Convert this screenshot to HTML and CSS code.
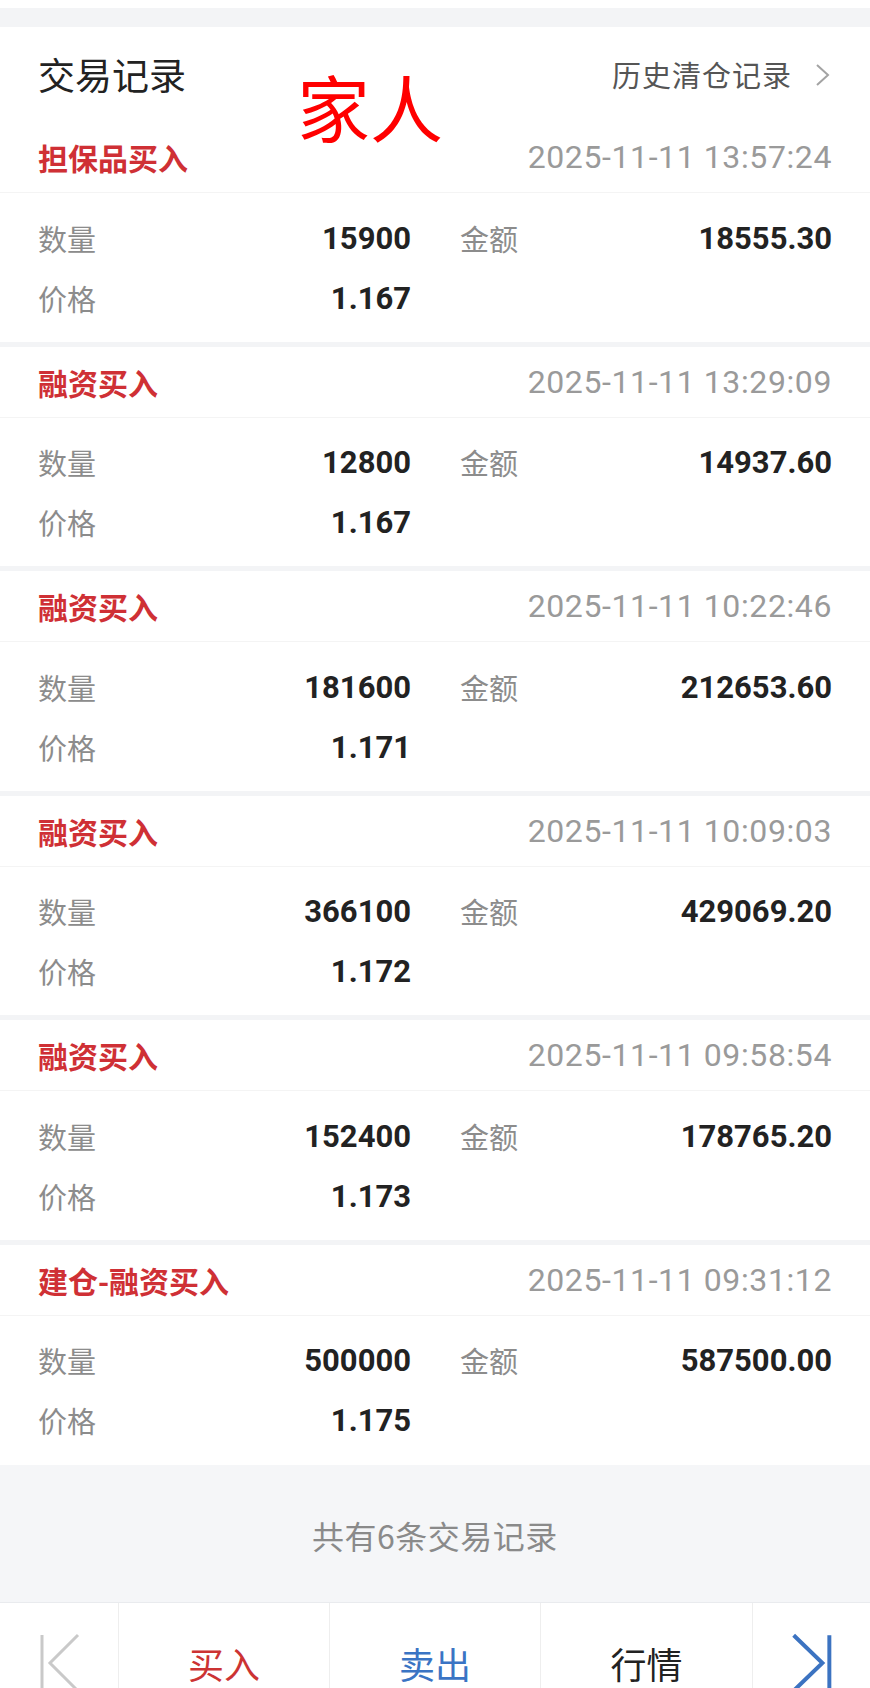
FILE: index.html
```html
<!DOCTYPE html>
<html lang="zh-CN">
<head>
<meta charset="utf-8">
<title>交易记录</title>
<link rel="stylesheet" href="styles.css">
</head>
<body>
<div class="page">
  <div class="top-strip"></div>
  <header class="title-bar">
    <h1 class="title">交易记录</h1>
    <a class="history">历史清仓记录<svg class="chev" width="18" height="24" viewBox="0 0 18 24"><polyline points="3,2 14,12 3,22" fill="none" stroke="#a3a3a3" stroke-width="2"/></svg></a>
    <span class="stamp">家人</span>
  </header>

  <section class="card first">
    <div class="card-head"><span class="kind">担保品买入</span><span class="time">2025-11-11 13:57:24</span></div>
    <div class="grid">
      <div class="cell"><span class="lab">数量</span><span class="val">15900</span></div>
      <div class="cell"><span class="lab">金额</span><span class="val">18555.30</span></div>
      <div class="cell"><span class="lab">价格</span><span class="val">1.167</span></div>
    </div>
  </section>

  <section class="card">
    <div class="card-head"><span class="kind">融资买入</span><span class="time">2025-11-11 13:29:09</span></div>
    <div class="grid">
      <div class="cell"><span class="lab">数量</span><span class="val">12800</span></div>
      <div class="cell"><span class="lab">金额</span><span class="val">14937.60</span></div>
      <div class="cell"><span class="lab">价格</span><span class="val">1.167</span></div>
    </div>
  </section>

  <section class="card">
    <div class="card-head"><span class="kind">融资买入</span><span class="time">2025-11-11 10:22:46</span></div>
    <div class="grid">
      <div class="cell"><span class="lab">数量</span><span class="val">181600</span></div>
      <div class="cell"><span class="lab">金额</span><span class="val">212653.60</span></div>
      <div class="cell"><span class="lab">价格</span><span class="val">1.171</span></div>
    </div>
  </section>

  <section class="card">
    <div class="card-head"><span class="kind">融资买入</span><span class="time">2025-11-11 10:09:03</span></div>
    <div class="grid">
      <div class="cell"><span class="lab">数量</span><span class="val">366100</span></div>
      <div class="cell"><span class="lab">金额</span><span class="val">429069.20</span></div>
      <div class="cell"><span class="lab">价格</span><span class="val">1.172</span></div>
    </div>
  </section>

  <section class="card">
    <div class="card-head"><span class="kind">融资买入</span><span class="time">2025-11-11 09:58:54</span></div>
    <div class="grid">
      <div class="cell"><span class="lab">数量</span><span class="val">152400</span></div>
      <div class="cell"><span class="lab">金额</span><span class="val">178765.20</span></div>
      <div class="cell"><span class="lab">价格</span><span class="val">1.173</span></div>
    </div>
  </section>

  <section class="card">
    <div class="card-head"><span class="kind">建仓-融资买入</span><span class="time">2025-11-11 09:31:12</span></div>
    <div class="grid">
      <div class="cell"><span class="lab">数量</span><span class="val">500000</span></div>
      <div class="cell"><span class="lab">金额</span><span class="val">587500.00</span></div>
      <div class="cell"><span class="lab">价格</span><span class="val">1.175</span></div>
    </div>
  </section>

  <div class="summary">共有6条交易记录</div>

  <nav class="nav">
    <div class="nav-edge">
      <svg width="118" height="120" viewBox="0 0 118 120"><line x1="42" y1="32" x2="42" y2="90" stroke="#c9c9c9" stroke-width="3"/><polyline points="78,32 50,60 78,88" fill="none" stroke="#c9c9c9" stroke-width="3"/></svg>
    </div>
    <div class="nav-item buy">买入</div>
    <div class="nav-item sell">卖出</div>
    <div class="nav-item quote">行情</div>
    <div class="nav-edge">
      <svg width="118" height="120" viewBox="0 0 118 120"><polyline points="41,32 70,60 41,88" fill="none" stroke="#3c73c1" stroke-width="4"/><line x1="77" y1="32" x2="77" y2="90" stroke="#3c73c1" stroke-width="4"/></svg>
    </div>
  </nav>
</div>
</body>
</html>
```

FILE: styles.css
```css
* { box-sizing: border-box; }
html, body { margin: 0; padding: 0; background: #ffffff; }
body {
  font-family: "Noto Sans CJK SC", "Noto Sans", sans-serif;
  color: #222;
}
.page { width: 870px; }
.top-strip { margin-top: 8px; height: 19px; background: #f3f4f6; }

.title-bar {
  position: relative;
  height: 90px;
  padding: 5px 38px 0 38px;
  display: flex;
  align-items: center;
  justify-content: space-between;
}
.title { margin: 0; font-size: 37px; font-weight: 400; color: #222; line-height: 1; }
.history {
  display: flex;
  align-items: center;
  gap: 22px;
  font-size: 29px;
  color: #555;
  line-height: 1;
  letter-spacing: 1px;
  text-decoration: none;
}
.chev { display: block; }
.stamp {
  position: absolute;
  left: 297px;
  top: 42px;
  font-size: 73px;
  line-height: 1;
  color: #ff0000;
  font-weight: 400;
}

.card { border-top: 5px solid #f3f4f6; }
.card.first { border-top-color: #ffffff; }
.card-head {
  height: 71px;
  padding: 0 38px;
  display: flex;
  align-items: center;
  justify-content: space-between;
  border-bottom: 1px solid #f4f4f4;
}
.kind { font-size: 30px; font-weight: 700; color: #cf3035; line-height: 1; }
.time {
  font-family: "Roboto", "Noto Sans", sans-serif;
  font-size: 32px;
  letter-spacing: 0.6px;
  color: #9a9a9a;
  line-height: 1;
}
.grid {
  display: grid;
  grid-template-columns: 373px 372px;
  column-gap: 49px;
  padding: 15px 38px 13.6px 38px;
}
.cell {
  height: 60px;
  display: flex;
  align-items: center;
  justify-content: space-between;
}
.lab { font-size: 29px; color: #8c8c8c; line-height: 1; }
.val {
  font-family: "Roboto", "Noto Sans", sans-serif;
  font-size: 31px;
  font-weight: 700;
  color: #222;
  line-height: 1;
}

.summary {
  height: 137px;
  background: #f5f6f8;
  display: flex;
  align-items: center;
  justify-content: center;
  font-size: 32px;
  letter-spacing: 0.5px;
  color: #8a8a8a;
  padding-top: 4px;
}

.nav {
  height: 120px;
  border-top: 1px solid #e9ebee;
  display: grid;
  grid-template-columns: 118px 211px 211px 212px 118px;
  background: #fff;
}
.nav > div { border-left: 1px solid #eeeeee; display: flex; align-items: center; justify-content: center; }
.nav > div:first-child { border-left: none; }
.nav-edge svg { display: block; }
.nav-item { font-size: 36px; line-height: 1; }
.buy { color: #cc3333; }
.sell { color: #3a74c4; }
.quote { color: #222; }
```
